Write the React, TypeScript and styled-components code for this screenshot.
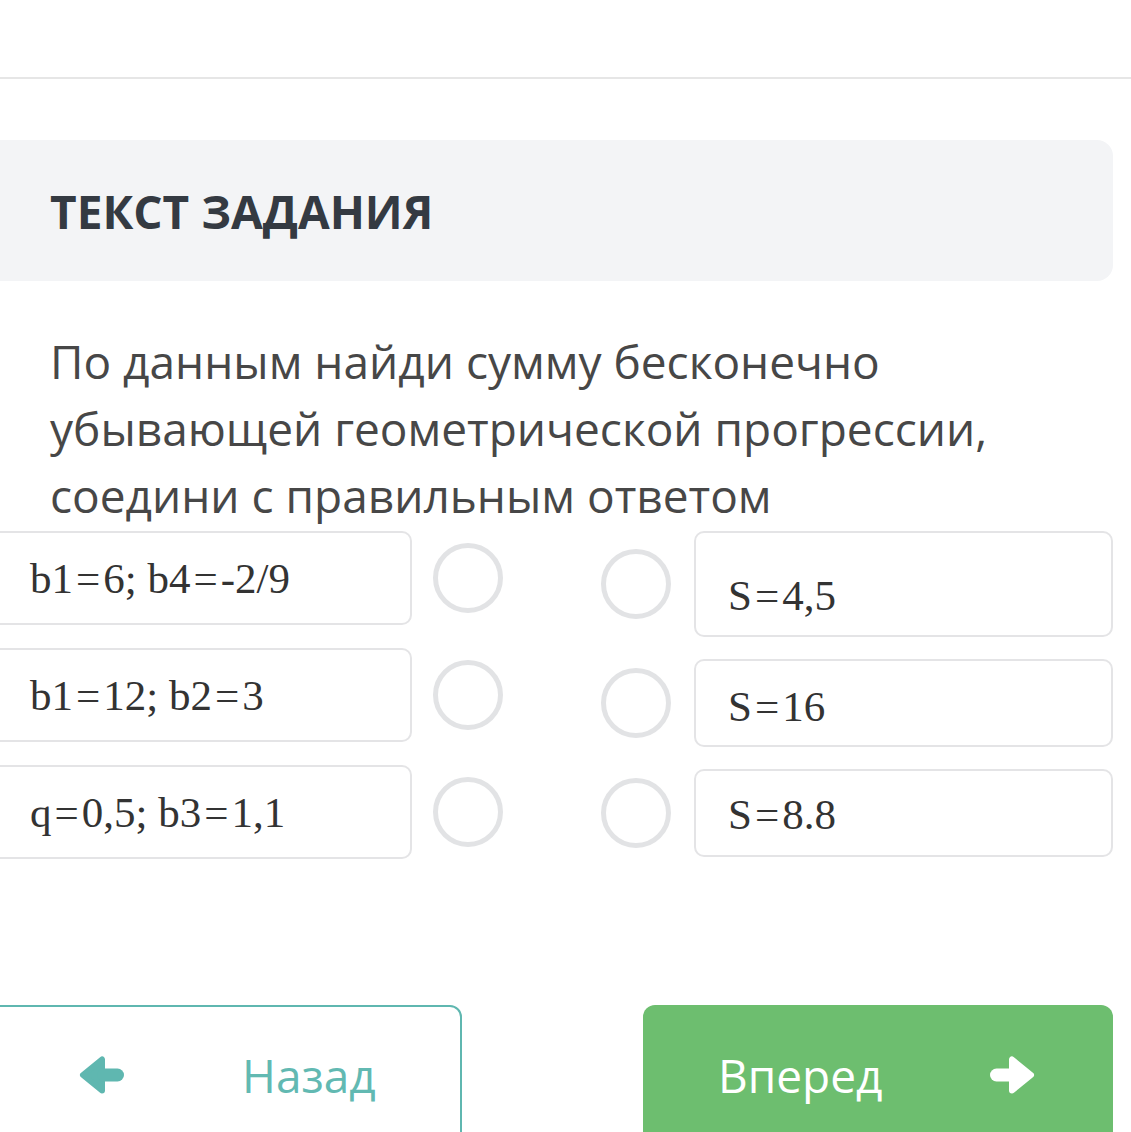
import React from "react";
import styled, { createGlobalStyle } from "styled-components";

const GlobalStyle = createGlobalStyle`
  html, body {
    margin: 0;
    padding: 0;
    background: #ffffff;
    overflow: hidden;
  }
  * { box-sizing: border-box; }
`;

const Page = styled.div`
  width: 1131px;
  height: 1132px;
  overflow: hidden;
  font-family: "Open Sans", "Noto Sans", sans-serif;
`;

const TopBar = styled.div`
  height: 79px;
  border-bottom: 2px solid #e6e6e6;
`;

const Column = styled.main`
  width: 1129px;
  margin-left: -16px;
  display: flex;
  flex-direction: column;
`;

const HeaderBox = styled.section`
  margin-top: 61px;
  height: 141px;
  background: #f3f4f6;
  border-radius: 16px;
  display: flex;
  align-items: center;
  padding-left: 66px;
`;

const HeaderTitle = styled.h2`
  margin: 0;
  font-size: 46px;
  font-weight: 700;
  color: #343a42;
`;

const Question = styled.p`
  margin: 47px 0 0;
  padding-left: 66px;
  font-size: 46px;
  line-height: 67px;
  color: #474747;
`;

const Matching = styled.div`
  display: flex;
  margin-top: 2px;
`;

const LeftColumn = styled.div`
  display: flex;
  flex-direction: column;
  gap: 23px;
`;

const RightColumn = styled.div`
  display: flex;
  flex-direction: column;
  gap: 22px;
  margin-left: 98px;
`;

const Item = styled.div`
  display: flex;
  align-items: center;
`;

const Card = styled.div<{ $width: number; $height: number; $padTop: number; $padLeft: number }>`
  width: ${(p) => p.$width}px;
  height: ${(p) => p.$height}px;
  border: 2px solid #e4e4e6;
  border-radius: 10px;
  background: #fff;
  display: flex;
  align-items: center;
  padding: ${(p) => p.$padTop}px 0 0 ${(p) => p.$padLeft}px;
  font-family: "Liberation Serif", "Times New Roman", serif;
  font-size: 43px;
  color: #333333;
  white-space: pre;
`;

const Eq = styled.span`
  margin: 0 3px;
`;

const Radio = styled.span<{ $side: "left" | "right" }>`
  width: 70px;
  height: 70px;
  border-radius: 50%;
  border: 5px solid #e2e3e5;
  flex: none;
  ${(p) => (p.$side === "left" ? "margin-left: 21px;" : "margin-right: 23px;")}
`;

const Nav = styled.nav`
  display: flex;
  justify-content: space-between;
  margin-top: 146px;
`;

const BackButton = styled.button`
  width: 478px;
  height: 140px;
  border: 2px solid #5fb7b0;
  border-radius: 12px;
  background: #ffffff;
  color: #62b9b2;
  display: flex;
  align-items: center;
  padding: 0 0 0 93px;
  font-family: "Open Sans", sans-serif;
  font-size: 46px;
  cursor: pointer;
  svg { flex: none; }
`;

const BackLabel = styled.span`
  margin-left: 116px;
`;

const NextButton = styled.button`
  width: 470px;
  height: 140px;
  border: none;
  border-radius: 12px;
  background: #6dbe6f;
  color: #ffffff;
  display: flex;
  align-items: center;
  justify-content: space-between;
  padding: 0 78px 0 75px;
  font-family: "Open Sans", sans-serif;
  font-size: 46px;
  cursor: pointer;
  svg { flex: none; }
`;

const ArrowIcon = ({ dir, color }: { dir: "left" | "right"; color: string }) => (
  <svg
    width="47"
    height="40"
    viewBox="0 0 47 40"
    style={dir === "right" ? { transform: "scaleX(-1)" } : undefined}
  >
    <path
      d="M4 20 L23 4.5 L23 35.5 Z"
      fill={color}
      stroke={color}
      strokeWidth="6"
      strokeLinejoin="round"
    />
    <rect x="18" y="13.5" width="27" height="13" rx="6.5" fill={color} />
  </svg>
);

const renderMath = (s: string) => {
  const parts = s.split("=");
  return parts.map((p, i) => (
    <React.Fragment key={i}>
      {i > 0 && <Eq>=</Eq>}
      {p}
    </React.Fragment>
  ));
};

const leftItems = ["b1=6; b4=-2/9", "b1=12; b2=3", "q=0,5; b3=1,1"];
const rightItems: { text: string; height: number; padTop: number }[] = [
  { text: "S=4,5", height: 106, padTop: 22 },
  { text: "S=16", height: 88, padTop: 6 },
  { text: "S=8.8", height: 88, padTop: 2 },
];

export default function App() {
  return (
    <Page>
      <GlobalStyle />
      <TopBar />
      <Column>
        <HeaderBox>
          <HeaderTitle>ТЕКСТ ЗАДАНИЯ</HeaderTitle>
        </HeaderBox>
        <Question>
          По данным найди сумму бесконечно
          <br />
          убывающей геометрической прогрессии,
          <br />
          соедини с правильным ответом
        </Question>
        <Matching>
          <LeftColumn>
            {leftItems.map((t) => (
              <Item key={t}>
                <Card $width={428} $height={94} $padTop={0} $padLeft={44}>
                  {renderMath(t)}
                </Card>
                <Radio $side="left" />
              </Item>
            ))}
          </LeftColumn>
          <RightColumn>
            {rightItems.map((r) => (
              <Item key={r.text}>
                <Radio $side="right" />
                <Card $width={419} $height={r.height} $padTop={r.padTop} $padLeft={32}>
                  {renderMath(r.text)}
                </Card>
              </Item>
            ))}
          </RightColumn>
        </Matching>
        <Nav>
          <BackButton>
            <ArrowIcon dir="left" color="#5fb7b0" />
            <BackLabel>Назад</BackLabel>
          </BackButton>
          <NextButton>
            <span>Вперед</span>
            <ArrowIcon dir="right" color="#ffffff" />
          </NextButton>
        </Nav>
      </Column>
    </Page>
  );
}
